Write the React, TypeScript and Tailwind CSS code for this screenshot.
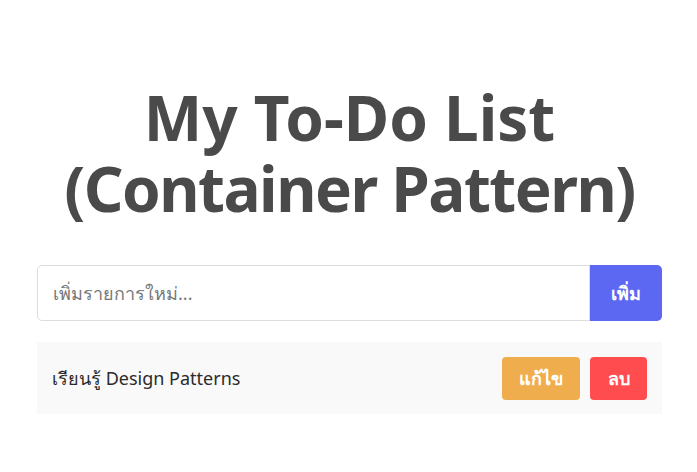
import { useState } from "react";

type Todo = { id: number; text: string };

export default function App() {
  const [todos] = useState<Todo[]>([{ id: 1, text: "เรียนรู้ Design Patterns" }]);
  const [value, setValue] = useState("");

  return (
    <div className="min-h-screen bg-white font-['Noto_Sans','Open_Sans',sans-serif] text-[#333]">
      <div className="ml-[37px] w-[625px] pt-[82px]">
        <h1 className="text-center text-[62px] font-bold leading-[71px] text-[#4a4a4a]">
          My To-Do List
          <br />
          <span className="tracking-[-1.5px]">(Container Pattern)</span>
        </h1>

        <div className="mt-[41px] flex h-[56px]">
          <input
            value={value}
            onChange={(e) => setValue(e.target.value)}
            placeholder="เพิ่มรายการใหม่..."
            className="flex-1 rounded-l-[5px] border border-[#ddd] px-[15px] text-[18px] outline-none placeholder:text-[#777]"
          />
          <button className="w-[72px] rounded-r-[5px] bg-[#5c67f2] text-[18px] font-semibold text-white">เพิ่ม</button>
        </div>

        <ul className="mt-[21px]">
          {todos.map((t) => (
            <li key={t.id} className="flex h-[72px] items-center justify-between bg-[#f9f9f9] pl-[15px] pr-[15px]">
              <span className="text-[18px] text-[#2b2b2b]">{t.text}</span>
              <div className="flex gap-[10px]">
                <button className="h-[43px] w-[78px] rounded-[4px] bg-[#f0ad4e] text-[18px] font-semibold text-white">แก้ไข</button>
                <button className="h-[43px] w-[57px] rounded-[4px] bg-[#ff4d4f] text-[18px] font-semibold text-white">ลบ</button>
              </div>
            </li>
          ))}
        </ul>
      </div>
    </div>
  );
}
